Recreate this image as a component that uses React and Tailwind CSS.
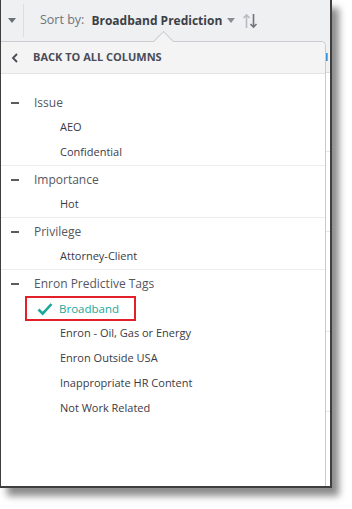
const groups = [
  { name: "Issue", items: ["AEO", "Confidential"] },
  { name: "Importance", items: ["Hot"] },
  { name: "Privilege", items: ["Attorney-Client"] },
  {
    name: "Enron Predictive Tags",
    items: [
      "Broadband",
      "Enron - Oil, Gas or Energy",
      "Enron Outside USA",
      "Inappropriate HR Content",
      "Not Work Related",
    ],
  },
];

const selected = "Broadband";

const Caret = ({ className }) => (
  <svg width="8" height="5" viewBox="0 0 8 5" className={className}>
    <path d="M0 0h8L4 5z" fill="currentColor" />
  </svg>
);

const SortIcon = () => (
  <svg width="16" height="16" viewBox="0 0 16 16">
    <g fill="none" strokeWidth="1.6">
      <path d="M4.5 15V2M1.5 5l3-3.2 3 3.2" stroke="#b8bcc2" />
      <path d="M11.5 1v13M8.5 11l3 3.2 3-3.2" stroke="#70757c" />
    </g>
  </svg>
);

const Check = () => (
  <svg width="16" height="14" viewBox="0 0 16 14">
    <path
      d="M1.5 7.5l4.2 4.2L14.5 2"
      fill="none"
      stroke="#1aa89a"
      strokeWidth="2.6"
    />
  </svg>
);

const Row = ({ label }) => {
  const isSel = label === selected;
  return (
    <div className="h-[25px] flex items-center">
      {isSel ? (
        <div className="ml-[24px] h-[25px] w-[111px] border-2 border-[#e3202a] flex items-center">
          <span className="ml-[10px] mt-[1px]">
            <Check />
          </span>
          <span className="ml-[6px] text-[11.5px] text-[#1aa89a]">{label}</span>
        </div>
      ) : (
        <span className="ml-[59px] text-[11px] text-[#3a3a44]">{label}</span>
      )}
    </div>
  );
};

export default function App() {
  return (
    <div
      className="w-[352px] h-[509px] bg-white overflow-hidden"
      style={{ fontFamily: '"Open Sans", sans-serif' }}
    >
      <div className="w-[332px] h-[488px] border-l border-r-2 border-b-2 border-[#3f3f3f] bg-[#eef0f1] flex flex-col shadow-[7px_8px_7px_rgba(0,0,0,0.45)]">
        {/* top bar */}
        <div className="h-[41px] flex items-center shrink-0">
          <div className="w-[22px] flex justify-center">
            <Caret className="text-[#6b6f76]" />
          </div>
          <div className="w-px h-[33px] bg-[#dcdee0]" />
          <span className="ml-[16px] text-[12.5px] text-[#70747a]">Sort by:</span>
          <span className="ml-[7px] text-[12px] font-bold text-[#3d3f47]">
            Broadband Prediction
          </span>
          <Caret className="ml-[5px] text-[#8a8e94]" />
          <span className="ml-[7px] flex">
            <SortIcon />
          </span>
        </div>

        <div className="flex flex-1 min-h-0">
          {/* dropdown panel */}
          <div className="relative w-[325px] bg-white border-t border-r border-[#c9cbce] rounded-tr-[5px] flex flex-col">
            <div className="absolute left-[155px] -top-[8px] w-[15px] h-[15px] rotate-45 bg-[#f4f4f4] border-t border-l border-[#c9cbce]" />
            <div className="relative h-[32px] bg-[#f4f4f4] border-b border-[#e2e3e5] rounded-tr-[5px] flex items-center shrink-0">
              <svg width="8" height="10" viewBox="0 0 8 10" className="ml-[10px]">
                <path d="M6 1L2 5l4 4" fill="none" stroke="#4a4c55" strokeWidth="1.8" />
              </svg>
              <span className="ml-[14px] text-[11px] font-bold text-[#4a4c58]">
                BACK TO ALL COLUMNS
              </span>
            </div>
            <div className="pt-[16px]">
              {groups.map((g, i) => (
                <div
                  key={g.name}
                  className={i > 0 ? "border-t border-[#ececee] pt-px" : ""}
                >
                  <div className="h-[25px] flex items-center">
                    <div className="ml-[10px] w-[8px] h-[2px] bg-[#5a5c62]" />
                    <span className="ml-[15px] text-[12px] text-[#55575e]">
                      {g.name}
                    </span>
                  </div>
                  {g.items.map((it) => (
                    <Row key={it} label={it} />
                  ))}
                </div>
              ))}
            </div>
          </div>

          {/* underlying page strip */}
          <div className="flex-1 flex flex-col bg-white">
            <div className="h-[32px] bg-[#f0f1f2] border-b border-[#dcdcdc] flex items-center">
              <div className="w-px h-[8px] bg-[#3b8fd0]" />
              <div className="w-px h-[8px] bg-[#e09a3a]" />
            </div>
            <div className="h-[79px] border-b border-[#e6e6e6]" />
            <div className="h-[80px] border-b border-[#e6e6e6]" />
            <div className="h-[100px] border-b border-[#e6e6e6]" />
            <div className="h-[80px] border-b border-[#e6e6e6]" />
          </div>
        </div>
      </div>
    </div>
  );
}
